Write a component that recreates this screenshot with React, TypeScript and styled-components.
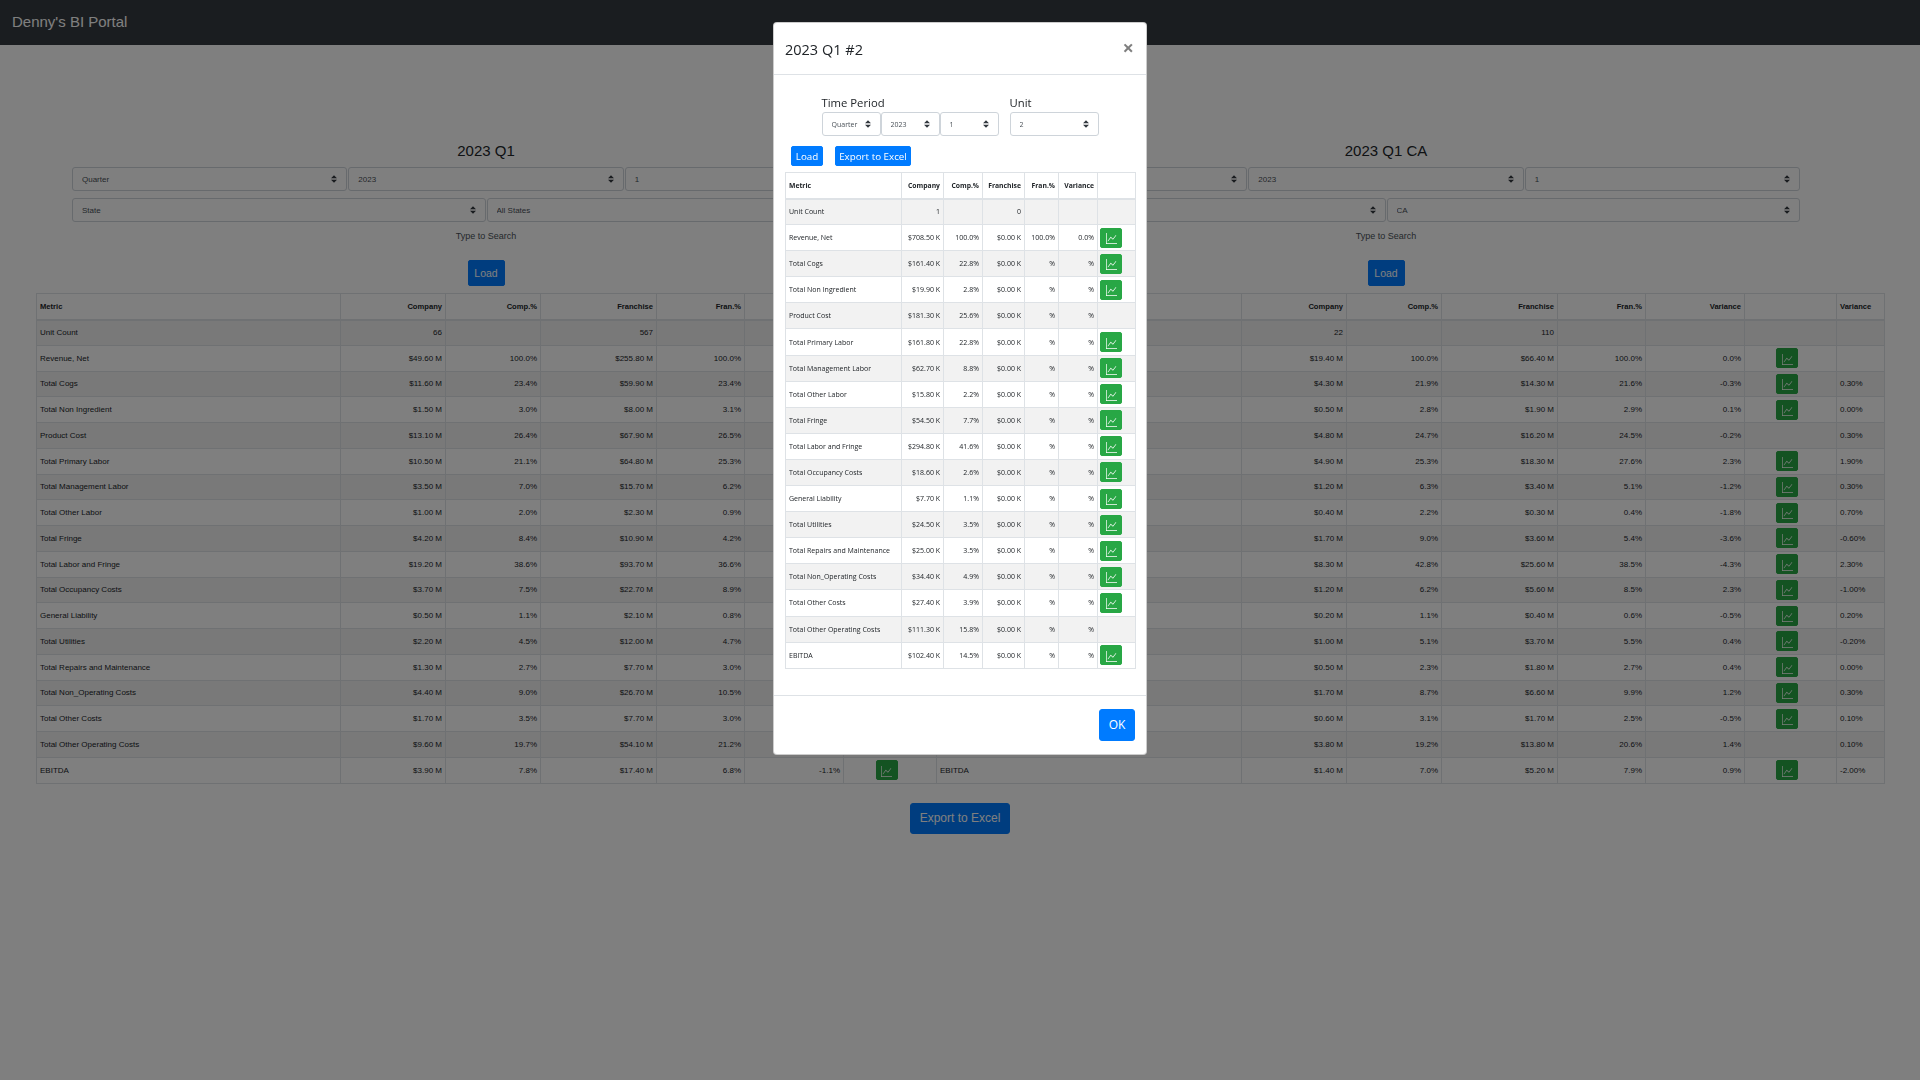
import styled, { createGlobalStyle } from "styled-components";
import { BsGraphUp } from "react-icons/bs";

type Row = {
  metric: string;
  company: string;
  compPct: string;
  franchise: string;
  franPct: string;
  variance: string;
  chart: boolean;
  extra?: string;
};

const METRICS = [
  "Unit Count",
  "Revenue, Net",
  "Total Cogs",
  "Total Non Ingredient",
  "Product Cost",
  "Total Primary Labor",
  "Total Management Labor",
  "Total Other Labor",
  "Total Fringe",
  "Total Labor and Fringe",
  "Total Occupancy Costs",
  "General Liability",
  "Total Utilities",
  "Total Repairs and Maintenance",
  "Total Non_Operating Costs",
  "Total Other Costs",
  "Total Other Operating Costs",
  "EBITDA",
];

// rows without a chart button
const NO_CHART = ["Unit Count", "Product Cost", "Total Other Operating Costs"];

const build = (values: string[][], extras?: string[]): Row[] =>
  METRICS.map((metric, i) => ({
    metric,
    company: values[i][0],
    compPct: values[i][1],
    franchise: values[i][2],
    franPct: values[i][3],
    variance: values[i][4],
    chart: !NO_CHART.includes(metric),
    extra: extras ? extras[i] : undefined,
  }));

const companyRows = build([
  ["66", "", "567", "", ""],
  ["$49.60 M", "100.0%", "$255.80 M", "100.0%", "0.0%"],
  ["$11.60 M", "23.4%", "$59.90 M", "23.4%", "0.0%"],
  ["$1.50 M", "3.0%", "$8.00 M", "3.1%", "0.1%"],
  ["$13.10 M", "26.4%", "$67.90 M", "26.5%", "0.1%"],
  ["$10.50 M", "21.1%", "$64.80 M", "25.3%", "4.2%"],
  ["$3.50 M", "7.0%", "$15.70 M", "6.2%", "-0.8%"],
  ["$1.00 M", "2.0%", "$2.30 M", "0.9%", "-1.1%"],
  ["$4.20 M", "8.4%", "$10.90 M", "4.2%", "-4.2%"],
  ["$19.20 M", "38.6%", "$93.70 M", "36.6%", "-2.0%"],
  ["$3.70 M", "7.5%", "$22.70 M", "8.9%", "1.4%"],
  ["$0.50 M", "1.1%", "$2.10 M", "0.8%", "-0.3%"],
  ["$2.20 M", "4.5%", "$12.00 M", "4.7%", "0.2%"],
  ["$1.30 M", "2.7%", "$7.70 M", "3.0%", "0.3%"],
  ["$4.40 M", "9.0%", "$26.70 M", "10.5%", "1.5%"],
  ["$1.70 M", "3.5%", "$7.70 M", "3.0%", "-0.5%"],
  ["$9.60 M", "19.7%", "$54.10 M", "21.2%", "1.5%"],
  ["$3.90 M", "7.8%", "$17.40 M", "6.8%", "-1.1%"],
]);

const stateRows = build(
  [
    ["22", "", "110", "", ""],
    ["$19.40 M", "100.0%", "$66.40 M", "100.0%", "0.0%"],
    ["$4.30 M", "21.9%", "$14.30 M", "21.6%", "-0.3%"],
    ["$0.50 M", "2.8%", "$1.90 M", "2.9%", "0.1%"],
    ["$4.80 M", "24.7%", "$16.20 M", "24.5%", "-0.2%"],
    ["$4.90 M", "25.3%", "$18.30 M", "27.6%", "2.3%"],
    ["$1.20 M", "6.3%", "$3.40 M", "5.1%", "-1.2%"],
    ["$0.40 M", "2.2%", "$0.30 M", "0.4%", "-1.8%"],
    ["$1.70 M", "9.0%", "$3.60 M", "5.4%", "-3.6%"],
    ["$8.30 M", "42.8%", "$25.60 M", "38.5%", "-4.3%"],
    ["$1.20 M", "6.2%", "$5.60 M", "8.5%", "2.3%"],
    ["$0.20 M", "1.1%", "$0.40 M", "0.6%", "-0.5%"],
    ["$1.00 M", "5.1%", "$3.70 M", "5.5%", "0.4%"],
    ["$0.50 M", "2.3%", "$1.80 M", "2.7%", "0.4%"],
    ["$1.70 M", "8.7%", "$6.60 M", "9.9%", "1.2%"],
    ["$0.60 M", "3.1%", "$1.70 M", "2.5%", "-0.5%"],
    ["$3.80 M", "19.2%", "$13.80 M", "20.6%", "1.4%"],
    ["$1.40 M", "7.0%", "$5.20 M", "7.9%", "0.9%"],
  ],
  ["", "", "0.30%", "0.00%", "0.30%", "1.90%", "0.30%", "0.70%", "-0.60%", "2.30%", "-1.00%", "0.20%", "-0.20%", "0.00%", "0.30%", "0.10%", "0.10%", "-2.00%"]
);

const unitRows = build([
  ["1", "", "0", "", ""],
  ["$708.50 K", "100.0%", "$0.00 K", "100.0%", "0.0%"],
  ["$161.40 K", "22.8%", "$0.00 K", "%", "%"],
  ["$19.90 K", "2.8%", "$0.00 K", "%", "%"],
  ["$181.30 K", "25.6%", "$0.00 K", "%", "%"],
  ["$161.80 K", "22.8%", "$0.00 K", "%", "%"],
  ["$62.70 K", "8.8%", "$0.00 K", "%", "%"],
  ["$15.80 K", "2.2%", "$0.00 K", "%", "%"],
  ["$54.50 K", "7.7%", "$0.00 K", "%", "%"],
  ["$294.80 K", "41.6%", "$0.00 K", "%", "%"],
  ["$18.60 K", "2.6%", "$0.00 K", "%", "%"],
  ["$7.70 K", "1.1%", "$0.00 K", "%", "%"],
  ["$24.50 K", "3.5%", "$0.00 K", "%", "%"],
  ["$25.00 K", "3.5%", "$0.00 K", "%", "%"],
  ["$34.40 K", "4.9%", "$0.00 K", "%", "%"],
  ["$27.40 K", "3.9%", "$0.00 K", "%", "%"],
  ["$111.30 K", "15.8%", "$0.00 K", "%", "%"],
  ["$102.40 K", "14.5%", "$0.00 K", "%", "%"],
]);

const LEFT_COLS = [304, 105, 95, 116, 88, 99, 93];
const RIGHT_COLS = [305, 105, 95, 116, 88, 99, 92];
const MODAL_COLS = [116, 42, 39, 42, 34, 39, 38];

function MetricTable({
  rows,
  cols,
  modal = false,
  extra = false,
}: {
  rows: Row[];
  cols: number[];
  modal?: boolean;
  extra?: boolean;
}) {
  const allCols = extra ? [...cols, 48] : cols;
  return (
    <Table $modal={modal} $width={allCols.reduce((a, b) => a + b, 0)}>
      <colgroup>
        {allCols.map((w, i) => (
          <Col key={i} $w={w} />
        ))}
      </colgroup>
      <thead>
        <tr>
          <HeadCell $modal={modal} $left>Metric</HeadCell>
          <HeadCell $modal={modal}>Company</HeadCell>
          <HeadCell $modal={modal}>Comp.%</HeadCell>
          <HeadCell $modal={modal}>Franchise</HeadCell>
          <HeadCell $modal={modal}>Fran.%</HeadCell>
          <HeadCell $modal={modal}>Variance</HeadCell>
          <HeadCell $modal={modal} />
          {extra && <HeadCell $modal={modal} $left>Variance</HeadCell>}
        </tr>
      </thead>
      <tbody>
        {rows.map((r) => (
          <tr key={r.metric}>
            <Cell $left>{r.metric}</Cell>
            <Cell>{r.company}</Cell>
            <Cell>{r.compPct}</Cell>
            <Cell>{r.franchise}</Cell>
            <Cell>{r.franPct}</Cell>
            <Cell>{r.variance}</Cell>
            <ChartCell $modal={modal}>
              {r.chart && (
                <ChartButton>
                  <BsGraphUp size={11} />
                </ChartButton>
              )}
            </ChartCell>
            {extra && <Cell $left>{r.extra}</Cell>}
          </tr>
        ))}
      </tbody>
    </Table>
  );
}

function Panel({
  title,
  stateValue,
  rows,
  cols,
  extra,
}: {
  title: string;
  stateValue: string;
  rows: Row[];
  cols: number[];
  extra?: boolean;
}) {
  return (
    <PanelWrap>
      <PanelTitle>{title}</PanelTitle>
      <FormRow>
        <BaseSelect defaultValue="Quarter">
          <option>Quarter</option>
        </BaseSelect>
        <BaseSelect defaultValue="2023">
          <option>2023</option>
        </BaseSelect>
        <BaseSelect defaultValue="1">
          <option>1</option>
        </BaseSelect>
      </FormRow>
      <FormRow>
        <BaseSelect defaultValue="State">
          <option>State</option>
        </BaseSelect>
        <BaseSelect defaultValue={stateValue}>
          <option>{stateValue}</option>
        </BaseSelect>
      </FormRow>
      <SearchHint>Type to Search</SearchHint>
      <PageLoad>Load</PageLoad>
      <TableSlot>
        <MetricTable rows={rows} cols={cols} extra={extra} />
      </TableSlot>
    </PanelWrap>
  );
}

export default function App() {
  return (
    <>
      <GlobalStyle />
      <NavBar>
        <Brand>Denny's BI Portal</Brand>
      </NavBar>
      <Panels>
        <Panel title="2023 Q1" stateValue="All States" rows={companyRows} cols={LEFT_COLS} />
        <Panel title="2023 Q1 CA" stateValue="CA" rows={stateRows} cols={RIGHT_COLS} extra />
      </Panels>
      <ExportRow>
        <PageExport>Export to Excel</PageExport>
      </ExportRow>

      <Backdrop />
      <ModalLayer>
        <Modal>
          <ModalHeader>
            <ModalTitle>2023 Q1 #2</ModalTitle>
            <CloseButton>×</CloseButton>
          </ModalHeader>
          <ModalBody>
            <Filters>
              <FilterGroup>
                <FilterLabel>Time Period</FilterLabel>
                <SelectRow>
                  <ModalSelect defaultValue="Quarter">
                    <option>Quarter</option>
                  </ModalSelect>
                  <ModalSelect defaultValue="2023">
                    <option>2023</option>
                  </ModalSelect>
                  <ModalSelect defaultValue="1">
                    <option>1</option>
                  </ModalSelect>
                </SelectRow>
              </FilterGroup>
              <FilterGroup>
                <FilterLabel>Unit</FilterLabel>
                <SelectRow>
                  <UnitSelect defaultValue="2">
                    <option>2</option>
                  </UnitSelect>
                </SelectRow>
              </FilterGroup>
            </Filters>
            <ModalActions>
              <SmallButton $w={32}>Load</SmallButton>
              <SmallButton $w={76}>Export to Excel</SmallButton>
            </ModalActions>
            <MetricTable rows={unitRows} cols={MODAL_COLS} modal />
          </ModalBody>
          <ModalFooter>
            <OkButton>OK</OkButton>
          </ModalFooter>
        </Modal>
      </ModalLayer>
    </>
  );
}

const ARROWS =
  "url(\"data:image/svg+xml,%3csvg xmlns='http://www.w3.org/2000/svg' width='4' height='5' viewBox='0 0 4 5'%3e%3cpath fill='%23343a40' d='M2 0L0 2h4zm0 5L0 3h4z'/%3e%3c/svg%3e\")";

const GlobalStyle = createGlobalStyle`
  html, body {
    margin: 0;
    background: #fff;
  }
  body {
    font-family: "Liberation Sans", Arial, sans-serif;
    color: #212529;
  }
  * {
    box-sizing: border-box;
  }
`;

const NavBar = styled.nav`
  height: 45px;
  padding: 0 0 2px 12px;
  background: #343a40;
  display: flex;
  align-items: center;
`;

const Brand = styled.span`
  color: #fff;
  font-size: 15px;
`;

const Panels = styled.main`
  display: flex;
  padding: 97px 0 0 36px;
`;

const PanelWrap = styled.section`
  width: 900px;
  flex: none;
  display: flex;
  flex-direction: column;
  align-items: center;
`;

const PanelTitle = styled.h2`
  margin: 0 0 7px;
  font-size: 15px;
  font-weight: 400;
  line-height: 18px;
`;

const FormRow = styled.div`
  width: 828px;
  display: flex;
  gap: 1px;
  margin-bottom: 7px;
`;

const BaseSelect = styled.select`
  appearance: none;
  flex: 1;
  min-width: 0;
  height: 24px;
  padding: 0 16px 0 9px;
  border: 1px solid #ced4da;
  border-radius: 3px;
  color: #495057;
  font-size: 8px;
  font-family: inherit;
  background: #fff ${ARROWS} no-repeat right 9px center / 6px 8px;
`;

const SearchHint = styled.div`
  margin-top: 2px;
  font-size: 9px;
  line-height: 11px;
  color: #495057;
`;

const PrimaryButton = styled.button`
  border: 1px solid #007bff;
  background: #007bff;
  color: #fff;
  font-family: inherit;
  padding: 0;
`;

const PageLoad = styled(PrimaryButton)`
  margin-top: 18px;
  width: 37px;
  height: 26px;
  border-radius: 2px;
  font-size: 10.5px;
`;

const TableSlot = styled.div`
  align-self: flex-start;
  margin-top: 7px;
`;

const ExportRow = styled.div`
  display: flex;
  justify-content: center;
  margin-top: 19px;
`;

const PageExport = styled(PrimaryButton)`
  width: 100px;
  height: 31px;
  border-radius: 3px;
  font-size: 12px;
`;

const Table = styled.table<{ $modal: boolean; $width: number }>`
  table-layout: fixed;
  border-collapse: collapse;
  width: ${(p) => p.$width}px;
  font-size: ${(p) => (p.$modal ? "7px" : "8px")};
  font-family: ${(p) =>
    p.$modal ? '"Open Sans", sans-serif' : "inherit"};
  color: #212529;

  thead tr {
    height: 26px;
  }
  tbody tr {
    height: ${(p) => (p.$modal ? "26.1px" : "25.75px")};
  }
  tbody tr:nth-child(odd) {
    background: rgba(0, 0, 0, 0.05);
  }
`;

const Col = styled.col<{ $w: number }>`
  width: ${(p) => p.$w}px;
`;

const HeadCell = styled.th<{ $left?: boolean; $modal: boolean }>`
  padding: 0 3px;
  font-size: ${(p) => (p.$modal ? "6.8px" : "7.6px")};
  font-weight: 700;
  text-align: ${(p) => (p.$left ? "left" : "right")};
  border: 1px solid #dee2e6;
  border-bottom-width: 2px;
  white-space: nowrap;
`;

const Cell = styled.td<{ $left?: boolean }>`
  padding: 0 3px;
  text-align: ${(p) => (p.$left ? "left" : "right")};
  border: 1px solid #dee2e6;
  white-space: nowrap;
`;

const ChartCell = styled.td<{ $modal: boolean }>`
  padding: ${(p) => (p.$modal ? "0 0 0 2px" : "0 7px 0 0")};
  text-align: ${(p) => (p.$modal ? "left" : "center")};
  border: 1px solid #dee2e6;
  line-height: 0;
`;

const ChartButton = styled.button`
  display: inline-flex;
  align-items: center;
  justify-content: center;
  width: 22px;
  height: 20px;
  padding: 2px 0 0;
  border: 1px solid #28a745;
  border-radius: 2px;
  background: #28a745;
  color: #fff;
`;

const Backdrop = styled.div`
  position: fixed;
  inset: 0;
  background: rgba(0, 0, 0, 0.5);
`;

const ModalLayer = styled.div`
  position: fixed;
  inset: 0;
  display: flex;
  justify-content: center;
  align-items: flex-start;
  padding-top: 22px;
`;

const Modal = styled.div`
  width: 374px;
  background: #fff;
  border: 1px solid rgba(0, 0, 0, 0.2);
  border-radius: 4px;
  font-family: "Open Sans", sans-serif;
  color: #212529;
`;

const ModalHeader = styled.header`
  height: 52px;
  padding: 2px 12px 0 11px;
  display: flex;
  align-items: center;
  justify-content: space-between;
  border-bottom: 1px solid #dee2e6;
`;

const ModalTitle = styled.h5`
  margin: 0;
  font-size: 14.5px;
  font-weight: 400;
`;

const CloseButton = styled.button`
  border: 0;
  background: none;
  padding: 0;
  margin-bottom: 4px;
  font-family: inherit;
  font-size: 20px;
  font-weight: 700;
  line-height: 1;
  color: #000;
  opacity: 0.5;
`;

const ModalBody = styled.div`
  padding: 20px 11px 26px;
`;

const Filters = styled.div`
  display: flex;
  gap: 11px;
  padding-left: 36.5px;
`;

const FilterGroup = styled.div`
  display: flex;
  flex-direction: column;
`;

const FilterLabel = styled.label`
  font-size: 11.3px;
  line-height: 16px;
  margin-bottom: 1px;
`;

const SelectRow = styled.div`
  display: flex;
`;

const ModalSelect = styled(BaseSelect)`
  flex: none;
  width: 59px;
  font-size: 7px;
  padding-left: 9px;
`;

const UnitSelect = styled(ModalSelect)`
  width: 89px;
`;

const ModalActions = styled.div`
  display: flex;
  gap: 12px;
  margin: 10px 0 6px 6px;
`;

const SmallButton = styled(PrimaryButton)<{ $w: number }>`
  width: ${(p) => p.$w}px;
  height: 20px;
  border-radius: 2px;
  font-size: 9.8px;
  white-space: nowrap;
`;

const ModalFooter = styled.footer`
  display: flex;
  justify-content: flex-end;
  padding: 13px 11px 13px;
  border-top: 1px solid #dee2e6;
`;

const OkButton = styled(PrimaryButton)`
  width: 36px;
  height: 32px;
  border-radius: 3px;
  font-size: 12px;
`;
